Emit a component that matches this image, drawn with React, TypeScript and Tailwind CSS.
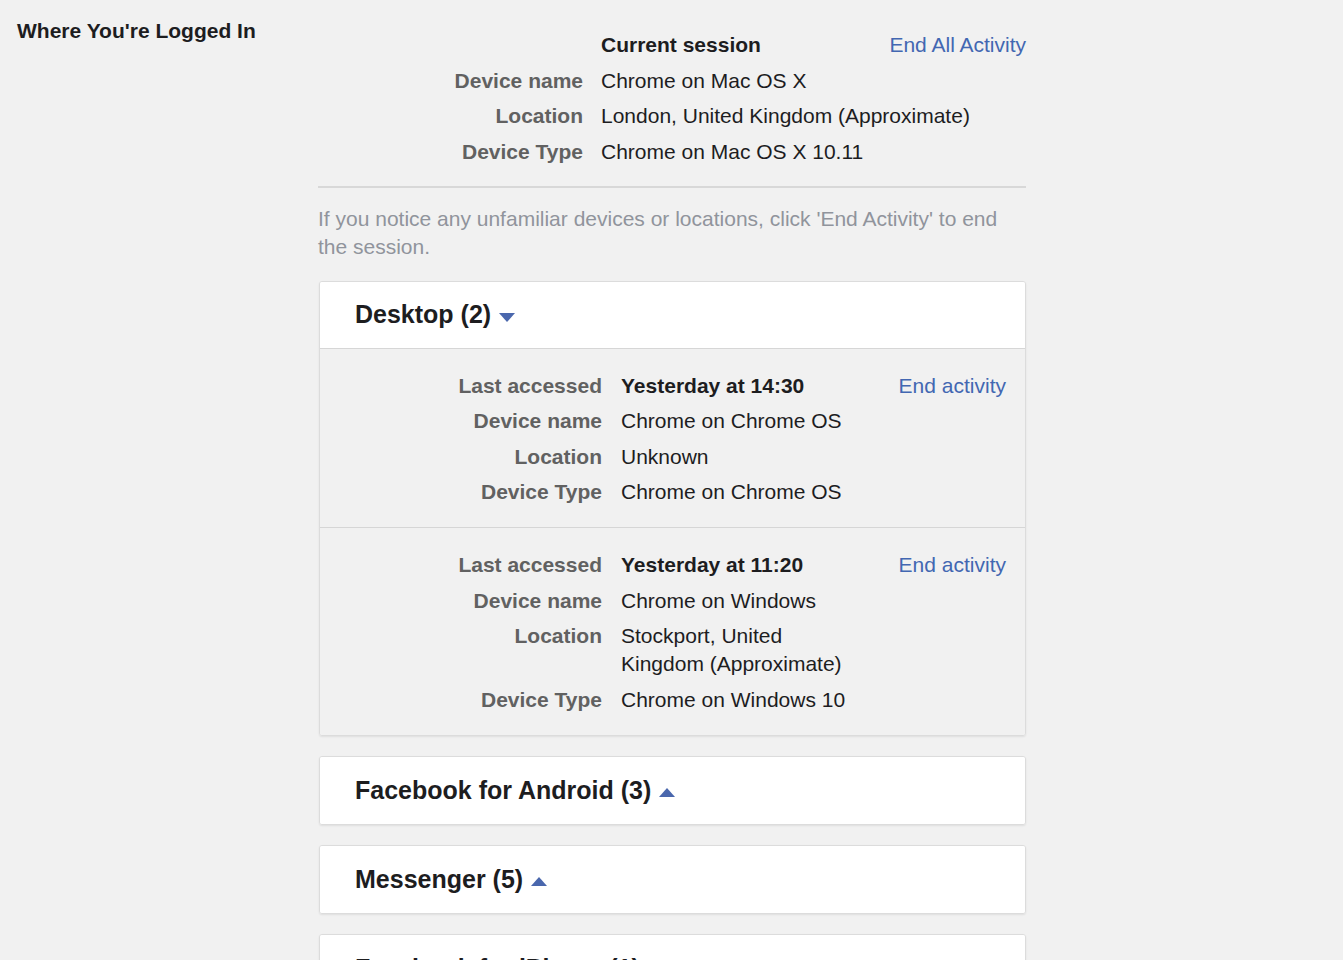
import type React from "react";

type Row = { label: string; value: string; bold?: boolean };

interface SessionProps {
  rows: Row[];
  last?: boolean;
}

const Caret: React.FC<{ up?: boolean }> = ({ up }) => (
  <svg width="16" height="10" viewBox="0 0 16 10" className={up ? "ml-[8px] mt-[4px]" : "ml-[8px] mt-[6px]"}>
    {up ? <polygon points="0,10 16,10 8,1" fill="#4a67ad" /> : <polygon points="0,0 16,0 8,9" fill="#4a67ad" />}
  </svg>
);

const SessionBlock: React.FC<SessionProps> = ({ rows, last }) => (
  <div className={`flex pt-[23px] pb-[21px] ${last ? "" : "border-b border-[#d6d6d6]"}`}>
    <div className="grid grid-cols-[282px_240px] gap-x-[19px] gap-y-[7.5px]">
      {rows.map((r) => (
        <div key={r.label} className="contents">
          <div className="text-right font-bold text-[#616161]">{r.label}</div>
          <div className={r.bold ? "font-bold text-[#1d1d1f]" : "text-[#1d1d1f]"}>{r.value}</div>
        </div>
      ))}
    </div>
    <div className="flex-1 text-right pr-[19px] text-[#4267b2] whitespace-nowrap">End activity</div>
  </div>
);

const CardHeader: React.FC<{ title: string; up?: boolean; open?: boolean }> = ({ title, up, open }) => (
  <div className={`h-[67px] bg-white flex items-center pl-[35px] ${open ? "border-b border-[#d6d6d6]" : ""}`}>
    <span className="text-[25px] font-bold text-[#1d1d1f] leading-none">{title}</span>
    <Caret up={up} />
  </div>
);

const Card: React.FC<{ children: React.ReactNode }> = ({ children }) => (
  <div className="rounded-[3px] border border-[#dcdcdc] shadow-[0_1px_2px_rgba(0,0,0,0.08)] overflow-hidden">
    {children}
  </div>
);

export default function App() {
  const current: Row[] = [
    { label: "Device name", value: "Chrome on Mac OS X" },
    { label: "Location", value: "London, United Kingdom (Approximate)" },
    { label: "Device Type", value: "Chrome on Mac OS X 10.11" },
  ];

  const first: Row[] = [
    { label: "Last accessed", value: "Yesterday at 14:30", bold: true },
    { label: "Device name", value: "Chrome on Chrome OS" },
    { label: "Location", value: "Unknown" },
    { label: "Device Type", value: "Chrome on Chrome OS" },
  ];

  const second: Row[] = [
    { label: "Last accessed", value: "Yesterday at 11:20", bold: true },
    { label: "Device name", value: "Chrome on Windows" },
    { label: "Location", value: "Stockport, United Kingdom (Approximate)" },
    { label: "Device Type", value: "Chrome on Windows 10" },
  ];

  return (
    <div
      className="h-[960px] overflow-hidden bg-[#f1f1f1] flex text-[21px] leading-[28px] text-[#1d1d1f]"
      style={{ fontFamily: '"Liberation Sans", Arial, sans-serif' }}
    >
      {/* Left title */}
      <div className="w-[318px] shrink-0 pl-[17px] pt-[17px]">
        <h1 className="font-bold text-[21px] leading-[28px] text-[#1d1d1f]">Where You're Logged In</h1>
      </div>

      {/* Main column */}
      <div className="w-[708px] shrink-0 pt-[31px]">
        <div className="pb-[20px] border-b-2 border-[#d8d8d8] flex flex-col gap-[7.5px]">
          <div className="flex justify-between pl-[283px]">
            <span className="font-bold">Current session</span>
            <span className="text-[#4267b2]">End All Activity</span>
          </div>
          <div className="grid grid-cols-[265px_1fr] gap-x-[18px] gap-y-[7.5px]">
            {current.map((r) => (
              <div key={r.label} className="contents">
                <div className="text-right font-bold text-[#616161]">{r.label}</div>
                <div className="whitespace-nowrap">{r.value}</div>
              </div>
            ))}
          </div>
        </div>

        <p className="mt-[17px] text-[#90949c] pr-[2px]">
          If you notice any unfamiliar devices or locations, click 'End Activity' to end the session.
        </p>

        <div className="mt-[20px] ml-[1px] flex flex-col gap-[20px]">
          <Card>
            <CardHeader title="Desktop (2)" open />
            <div className="bg-[#f1f1f1]">
              <SessionBlock rows={first} />
              <SessionBlock rows={second} last />
            </div>
          </Card>
          <Card>
            <CardHeader title="Facebook for Android (3)" up />
          </Card>
          <Card>
            <CardHeader title="Messenger (5)" up />
          </Card>
          <Card>
            <CardHeader title="Facebook for iPhone (1)" up />
          </Card>
        </div>
      </div>
    </div>
  );
}
